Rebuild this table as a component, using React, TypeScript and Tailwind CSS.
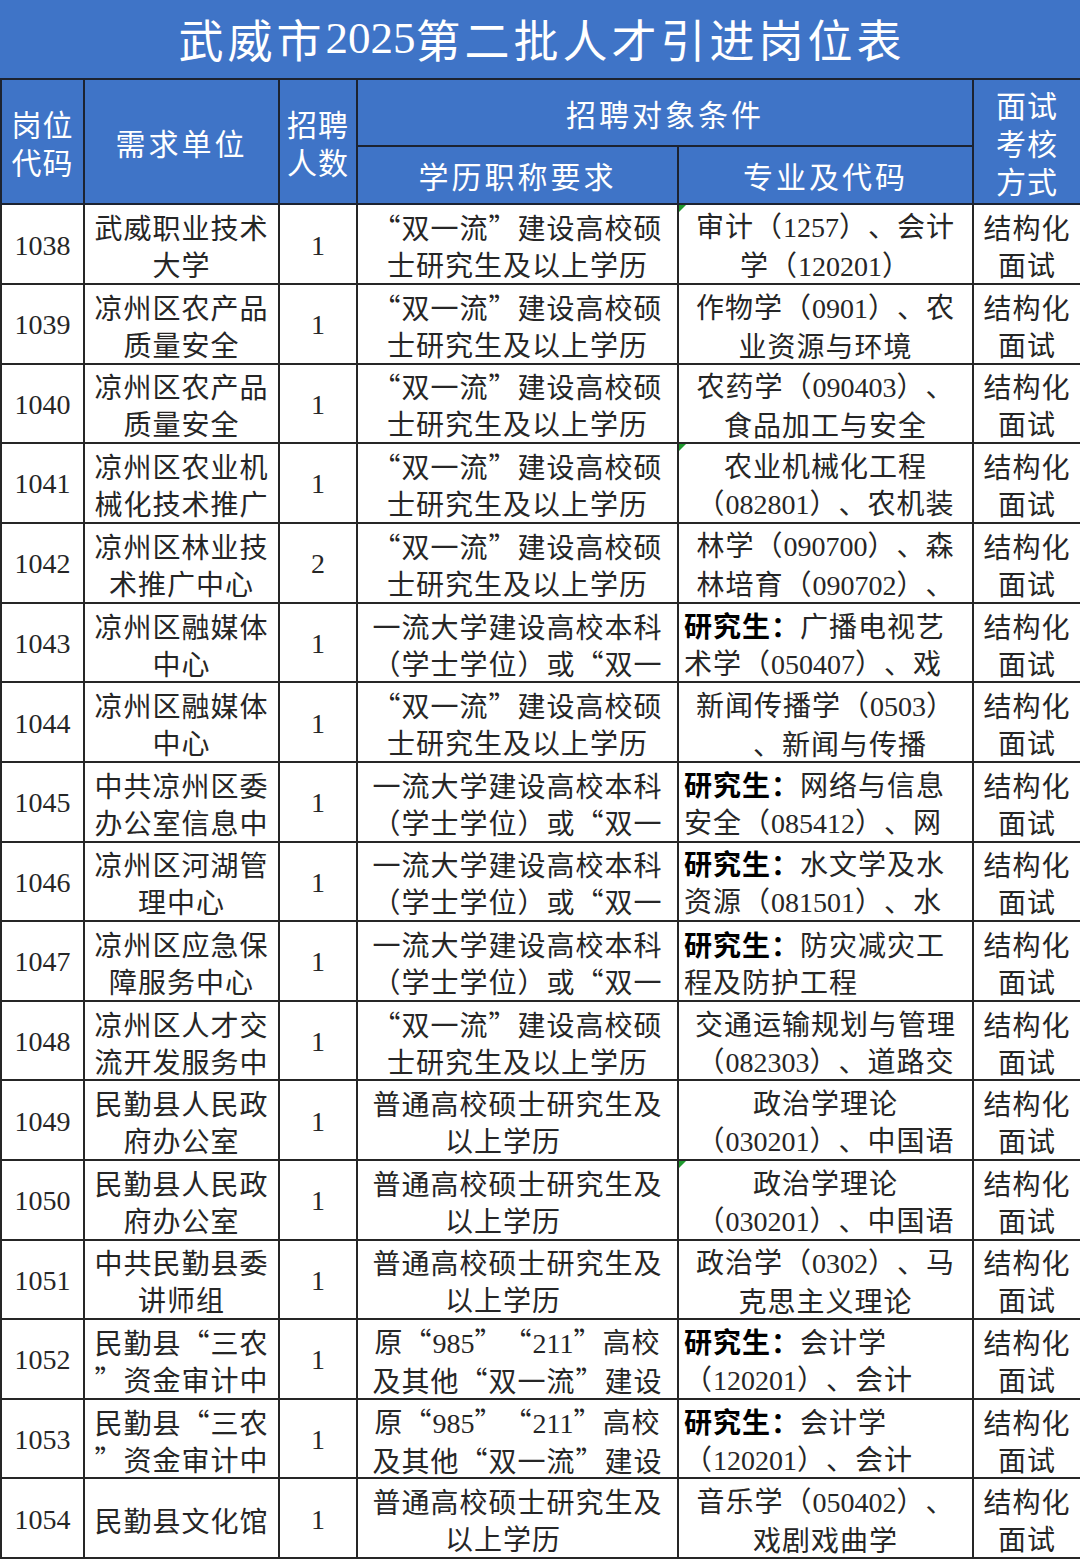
import React from "react";

type Align = "center" | "left";

interface Row {
  code: string;
  unit: string[];
  count: string;
  edu: string[];
  major: string[];
  majorAlign?: Align;
  marker?: boolean;
}

const MASTER = ["“双一流”建设高校硕", "士研究生及以上学历"];
const BACHELOR = ["一流大学建设高校本科", "（学士学位）或“双一"];
const NORMAL = ["普通高校硕士研究生及", "以上学历　"];
const ORIG = ["原“985”“211”高校", "及其他“双一流”建设"];

const rows: Row[] = [
  { code: "1038", unit: ["武威职业技术", "大学"], count: "1", edu: MASTER, major: ["审计（1257）、会计", "学（120201）"], marker: true },
  { code: "1039", unit: ["凉州区农产品", "质量安全"], count: "1", edu: MASTER, major: ["作物学（0901）、农", "业资源与环境"] },
  { code: "1040", unit: ["凉州区农产品", "质量安全"], count: "1", edu: MASTER, major: ["农药学（090403）、", "食品加工与安全"] },
  { code: "1041", unit: ["凉州区农业机", "械化技术推广"], count: "1", edu: MASTER, major: ["农业机械化工程", "（082801）、农机装"], marker: true },
  { code: "1042", unit: ["凉州区林业技", "术推广中心"], count: "2", edu: MASTER, major: ["林学（090700）、森", "林培育（090702）、"] },
  { code: "1043", unit: ["凉州区融媒体", "中心"], count: "1", edu: BACHELOR, major: ["研究生：广播电视艺", "术学（050407）、戏"], majorAlign: "left" },
  { code: "1044", unit: ["凉州区融媒体", "中心"], count: "1", edu: MASTER, major: ["新闻传播学（0503）", "　、新闻与传播"] },
  { code: "1045", unit: ["中共凉州区委", "办公室信息中"], count: "1", edu: BACHELOR, major: ["研究生：网络与信息", "安全（085412）、网"], majorAlign: "left" },
  { code: "1046", unit: ["凉州区河湖管", "理中心"], count: "1", edu: BACHELOR, major: ["研究生：水文学及水", "资源（081501）、水"], majorAlign: "left" },
  { code: "1047", unit: ["凉州区应急保", "障服务中心"], count: "1", edu: BACHELOR, major: ["研究生：防灾减灾工", "程及防护工程"], majorAlign: "left" },
  { code: "1048", unit: ["凉州区人才交", "流开发服务中"], count: "1", edu: MASTER, major: ["交通运输规划与管理", "（082303）、道路交"] },
  { code: "1049", unit: ["民勤县人民政", "府办公室"], count: "1", edu: NORMAL, major: ["政治学理论", "（030201）、中国语"] },
  { code: "1050", unit: ["民勤县人民政", "府办公室"], count: "1", edu: NORMAL, major: ["政治学理论", "（030201）、中国语"], marker: true },
  { code: "1051", unit: ["中共民勤县委", "讲师组"], count: "1", edu: NORMAL, major: ["政治学（0302）、马", "克思主义理论"] },
  { code: "1052", unit: ["民勤县“三农", "”资金审计中"], count: "1", edu: ORIG, major: ["研究生：会计学", "（120201）、会计"], majorAlign: "left" },
  { code: "1053", unit: ["民勤县“三农", "”资金审计中"], count: "1", edu: ORIG, major: ["研究生：会计学", "（120201）、会计"], majorAlign: "left" },
  { code: "1054", unit: ["民勤县文化馆"], count: "1", edu: NORMAL, major: ["音乐学（050402）、", "戏剧戏曲学"] },
];

// digits look like Times in the source sheet, so give them the serif face
const Txt = ({ text }: { text: string }) => {
  const parts = text.split(/(\d+)/);
  return (
    <>
      {parts.map((p, i) =>
        /^\d+$/.test(p) ? (
          <span key={i} className="font-[Liberation_Serif,serif] tracking-normal">
            {p}
          </span>
        ) : (
          <React.Fragment key={i}>{p}</React.Fragment>
        )
      )}
    </>
  );
};

const Line = ({ text }: { text: string }) => {
  if (text.startsWith("研究生：")) {
    return (
      <div className="whitespace-pre">
        <span className="font-bold text-black">研究生：</span>
        <Txt text={text.slice(4)} />
      </div>
    );
  }
  return (
    <div className="whitespace-pre">
      <Txt text={text} />
    </div>
  );
};

const Lines = ({ lines, align = "center" }: { lines: string[]; align?: Align }) => (
  <div className={(align === "left" ? "text-left pl-[5px]" : "text-center") + " translate-y-[2px]"}>
    {lines.map((l, i) => (
      <Line key={i} text={l} />
    ))}
  </div>
);

const th =
  "border-2 border-[#1c2331] bg-[#3f74c7] text-white font-normal align-middle p-0 text-[30px] leading-[38px]";
const td = "border-2 border-[#262626] align-middle p-0 overflow-hidden";

export default function App() {
  return (
    <div className="w-[1080px] h-[1559px] overflow-hidden bg-white font-[Noto_Sans_CJK_SC,sans-serif] text-[#262626] [text-spacing-trim:space-all]">
      <div className="h-[80px] bg-[#3f74c7] border-b-2 border-[#1c2331] flex items-center justify-center text-white text-[45px] tracking-[4px] pl-[4px]">
        <Txt text="武威市2025第二批人才引进岗位表" />
      </div>
      <table className="w-[1080px] table-fixed border-collapse -mt-[2px]">
        <colgroup>
          <col className="w-[83px]" />
          <col className="w-[195px]" />
          <col className="w-[78px]" />
          <col className="w-[321px]" />
          <col className="w-[295px]" />
          <col className="w-[108px]" />
        </colgroup>
        <thead>
          <tr className="h-[67px]">
            <th rowSpan={2} className={th + " tracking-[1px]"}>
              <div>岗位</div>
              <div>代码</div>
            </th>
            <th rowSpan={2} className={th + " tracking-[3px]"}>
              需求单位
            </th>
            <th rowSpan={2} className={th + " tracking-[1px]"}>
              <div>招聘</div>
              <div>人数</div>
            </th>
            <th colSpan={2} className={th + " tracking-[3px]"}>
              招聘对象条件
            </th>
            <th rowSpan={2} className={th + " tracking-[1px]"}>
              <div>面试</div>
              <div>考核</div>
              <div>方式</div>
            </th>
          </tr>
          <tr className="h-[58px]">
            <th className={th + " tracking-[3px]"}>学历职称要求</th>
            <th className={th + " tracking-[3px]"}>专业及代码</th>
          </tr>
        </thead>
        <tbody className="text-[28px] leading-[37px] tracking-[1px]">
          {rows.map((r) => (
            <tr key={r.code} className="h-[79.6px]">
              <td className={td + " text-center"}>
                <span className="font-[Liberation_Serif,serif] tracking-normal">{r.code}</span>
              </td>
              <td className={td}>
                <Lines lines={r.unit} />
              </td>
              <td className={td + " text-center"}>
                <span className="font-[Liberation_Serif,serif] tracking-normal">{r.count}</span>
              </td>
              <td className={td}>
                <Lines lines={r.edu} />
              </td>
              <td className={td + " relative"}>
                {r.marker && (
                  <span className="absolute left-0 top-0 w-0 h-0 border-t-[7px] border-r-[7px] border-t-[#1f9a2e] border-r-transparent" />
                )}
                <Lines lines={r.major} align={r.majorAlign} />
              </td>
              <td className={td}>
                <Lines lines={["结构化", "面试"]} />
              </td>
            </tr>
          ))}
        </tbody>
      </table>
    </div>
  );
}
